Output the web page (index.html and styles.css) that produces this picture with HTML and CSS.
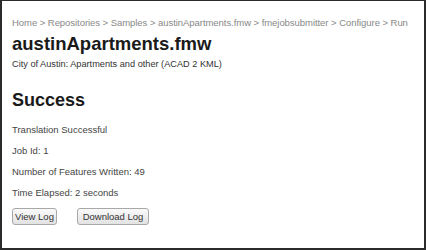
FILE: index.html
```html
<!DOCTYPE html>
<html>
<head>
<meta charset="utf-8">
<link rel="stylesheet" href="styles.css">
</head>
<body>
<div class="frame">
  <div class="crumbs">Home &gt; Repositories &gt; Samples &gt; austinApartments.fmw &gt; fmejobsubmitter &gt; Configure &gt; Run</div>
  <h1 class="title">austinApartments.fmw</h1>
  <div class="subtitle">City of Austin: Apartments and other (ACAD 2 KML)</div>
  <h2 class="status">Success</h2>
  <div class="info">
    <p>Translation Successful</p>
    <p>Job Id: 1</p>
    <p>Number of Features Written: 49</p>
    <p>Time Elapsed: 2 seconds</p>
  </div>
  <div class="actions">
    <button class="btn btn-view">View Log</button>
    <button class="btn btn-download">Download Log</button>
  </div>
</div>
</body>
</html>
```
FILE: styles.css
```css
html, body {
  margin: 0;
  padding: 0;
  background: #ffffff;
}
.frame {
  box-sizing: border-box;
  width: 426px;
  height: 250px;
  border: 2px solid #2b2b2b;
  border-top-width: 1px;
  padding: 15px 10px 0 10px;
  font-family: "Liberation Sans", Arial, sans-serif;
  color: #444;
  overflow: hidden;
}
.crumbs {
  font-size: 9.5px;
  letter-spacing: -0.05px;
  line-height: 14px;
  white-space: nowrap;
  color: #888;
}
.title {
  margin: 3px 0 0;
  font-size: 18.5px;
  line-height: 22px;
  font-weight: bold;
  color: #1a1a1a;
}
.subtitle {
  margin-top: 3px;
  font-size: 9.2px;
  line-height: 13px;
  color: #333;
}
.status {
  margin: 18px 0 0;
  font-size: 18px;
  line-height: 22px;
  font-weight: bold;
  color: #1a1a1a;
}
.info {
  margin-top: 13px;
  display: flex;
  flex-direction: column;
  gap: 8.5px;
}
.info p {
  margin: 0;
  font-size: 9.5px;
  line-height: 12.5px;
  color: #444;
}
.actions {
  margin-top: 8px;
  display: flex;
  gap: 20px;
}
.btn {
  font-family: "Liberation Sans", Arial, sans-serif;
  font-size: 9.5px;
  color: #333;
  height: 17px;
  padding: 0;
  border: 1px solid #a8a8a8;
  border-radius: 3px;
  background: linear-gradient(#fafafa, #e2e2e2);
}
.btn-view {
  width: 45px;
}
.btn-download {
  width: 72px;
}
```
